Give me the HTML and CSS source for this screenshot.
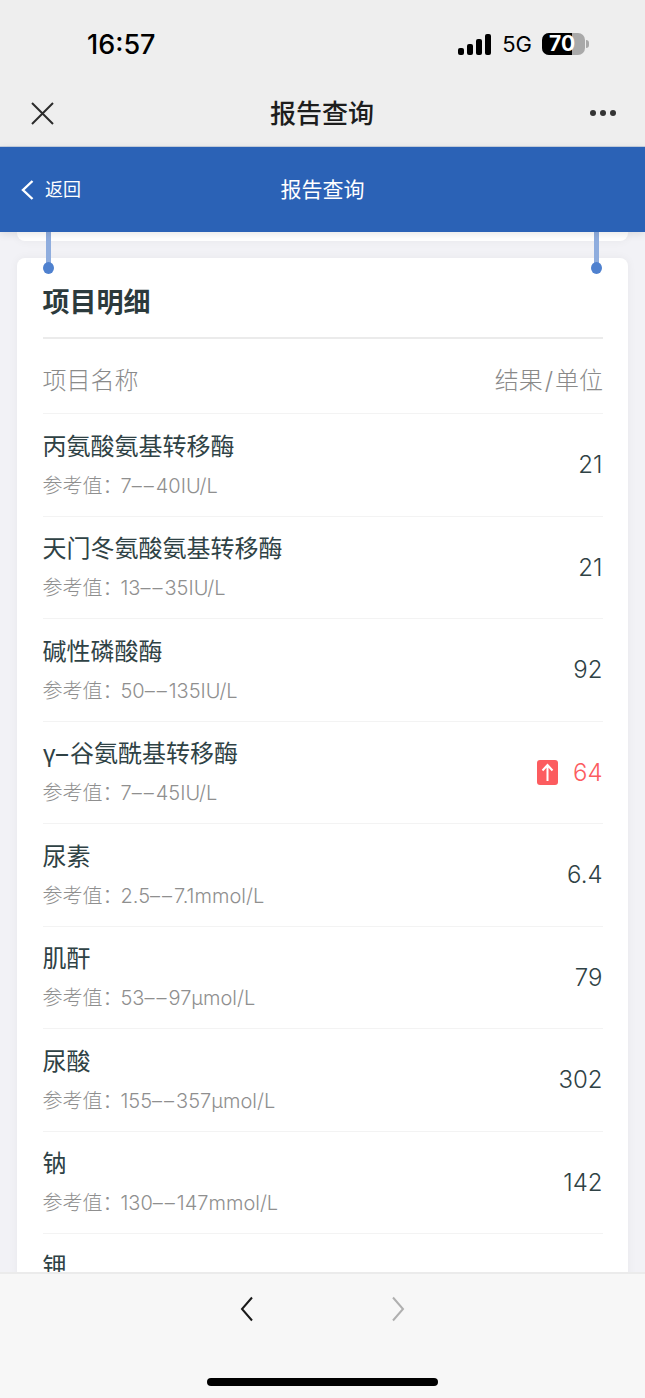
FILE: index.html
```html
<!DOCTYPE html>
<html>

<head>
    <meta charset="utf-8">
    <title>报告查询</title>
    <link rel="stylesheet" href="styles.css">
</head>

<body>
    <div class="status-bar">
        <span class="time">16:57</span>
        <div class="status-right">
            <svg class="signal" width="34" height="21" viewBox="0 0 34 21">
                <rect x="0" y="14" width="6" height="7" rx="2"></rect>
                <rect x="9" y="10" width="6" height="11" rx="2"></rect>
                <rect x="18" y="5" width="6" height="16" rx="2"></rect>
                <rect x="27" y="0" width="6" height="21" rx="2"></rect>
            </svg>
            <span class="network">5G</span>
            <div class="battery">
                <div class="battery-body">
                    <div class="battery-fill"></div>
                    <span class="battery-num">70</span>
                </div>
                <div class="battery-cap"></div>
            </div>
        </div>
    </div>

    <div class="nav-bar">
        <svg width="23" height="23" viewBox="0 0 23 23" class="nav-icon">
            <path d="M1 1 L22 22 M22 1 L1 22" fill="none" stroke="#2b2b2b" stroke-width="2"></path>
        </svg>
        <span class="nav-title">报告查询</span>
        <div class="dots"><i></i><i></i><i></i></div>
    </div>

    <div class="blue-header">
        <div class="back">
            <svg width="14" height="22" viewBox="0 0 14 22">
                <path d="M12.5 2 L3 11 L12.5 20" fill="none" stroke="#fff" stroke-width="2.4"></path>
            </svg>
            <span>返回</span>
        </div>
        <span class="blue-title">报告查询</span>
    </div>

    <div class="content">
        <div class="prev-card"></div>
        <div class="pin pin-left"></div>
        <div class="pin pin-right"></div>
        <div class="card">
            <h2 class="card-title">项目明细</h2>
            <div class="table-head">
                <span>项目名称</span>
                <span>结果<span class="slash">/</span>单位</span>
            </div>
            <div class="row">
                <div><div class="name">丙氨酸氨基转移酶</div><div class="ref"><span class="ref-label">参考值：</span>7<span class="dash">––</span>40IU/L</div></div>
                <div class="value">21</div>
            </div>
            <div class="row">
                <div><div class="name">天门冬氨酸氨基转移酶</div><div class="ref"><span class="ref-label">参考值：</span>13<span class="dash">––</span>35IU/L</div></div>
                <div class="value">21</div>
            </div>
            <div class="row">
                <div><div class="name">碱性磷酸酶</div><div class="ref"><span class="ref-label">参考值：</span>50<span class="dash">––</span>135IU/L</div></div>
                <div class="value">92</div>
            </div>
            <div class="row">
                <div><div class="name">γ<span class="dash">–</span>谷氨酰基转移酶</div><div class="ref"><span class="ref-label">参考值：</span>7<span class="dash">––</span>45IU/L</div></div>
                <div class="value high">
                    <svg width="21" height="25" viewBox="0 0 21 25">
                        <rect width="21" height="25" rx="3" fill="#fc5c5f"></rect>
                        <path d="M10.5 21 V5 M5.5 10.5 L10.5 5 L15.5 10.5" fill="none" stroke="#fff" stroke-width="2"></path>
                    </svg>
                    <span>64</span>
                </div>
            </div>
            <div class="row">
                <div><div class="name">尿素</div><div class="ref"><span class="ref-label">参考值：</span>2.5<span class="dash">––</span>7.1mmol/L</div></div>
                <div class="value">6.4</div>
            </div>
            <div class="row">
                <div><div class="name">肌酐</div><div class="ref"><span class="ref-label">参考值：</span>53<span class="dash">––</span>97μmol/L</div></div>
                <div class="value">79</div>
            </div>
            <div class="row">
                <div><div class="name">尿酸</div><div class="ref"><span class="ref-label">参考值：</span>155<span class="dash">––</span>357μmol/L</div></div>
                <div class="value">302</div>
            </div>
            <div class="row">
                <div><div class="name">钠</div><div class="ref"><span class="ref-label">参考值：</span>130<span class="dash">––</span>147mmol/L</div></div>
                <div class="value">142</div>
            </div>
            <div class="row">
                <div><div class="name">钾</div><div class="ref"></div></div>
            </div>
        </div>
    </div>

    <div class="toolbar">
        <div class="toolbar-arrows">
            <svg width="14" height="26" viewBox="0 0 14 26">
                <path d="M12 1.5 L2 13 L12 24.5" fill="none" stroke="#1a1a1a" stroke-width="2"></path>
            </svg>
            <svg width="14" height="26" viewBox="0 0 14 26">
                <path d="M2 1.5 L12 13 L2 24.5" fill="none" stroke="#b0b0b0" stroke-width="2"></path>
            </svg>
        </div>
        <div class="home-bar"></div>
    </div>
</body>

</html>
```

FILE: styles.css
```css
* {
    box-sizing: border-box;
}

html,
body {
    margin: 0;
    height: 1398px;
    overflow: hidden;
}

body {
    display: flex;
    flex-direction: column;
    font-family: Inter, "Noto Sans CJK SC", sans-serif;
    background-color: #f2f2f6;
}

.status-bar {
    height: 88px;
    flex: none;
    padding: 0 56px 0 87px;
    display: flex;
    justify-content: space-between;
    align-items: center;
    background-color: #eeeeee;
    color: #000;
}

.time {
    font-size: 27px;
    font-weight: 500;
}

.status-right {
    display: flex;
    align-items: center;
}

.signal {
    margin-right: 10px;
}

.signal rect {
    fill: #000;
}

.network {
    font-size: 22px;
    font-weight: 400;
    margin-right: 10px;
}

.battery {
    display: flex;
    align-items: center;
}

.battery-body {
    position: relative;
    width: 43px;
    height: 22px;
    border-radius: 7px;
    background-color: #a9a9a9;
}

.battery-fill {
    width: 30px;
    height: 100%;
    border-radius: 7px 0 0 7px;
    background-color: #000;
}

.battery-num {
    position: absolute;
    left: 7px;
    top: -1px;
    font-size: 21px;
    line-height: 24px;
    font-weight: 700;
    color: #fff;
}

.battery-cap {
    width: 3px;
    height: 8px;
    margin-left: 1px;
    border-radius: 0 3px 3px 0;
    background-color: #a9a9a9;
}

.nav-bar {
    height: 59px;
    flex: none;
    padding: 0 29px 8px 31px;
    display: flex;
    justify-content: space-between;
    align-items: center;
    background-color: #eeeeee;
    border-bottom: 1px solid #c5cfdf;
}

.nav-title {
    margin-bottom: 4px;
    font-size: 26px;
    font-weight: 500;
    color: #1d1d1d;
}

.dots {
    display: flex;
    gap: 4px;
}

.dots i {
    width: 6px;
    height: 6px;
    border-radius: 50%;
    background-color: #333;
}

.blue-header {
    position: relative;
    height: 85px;
    flex: none;
    display: flex;
    align-items: center;
    justify-content: center;
    background-color: #2b62b6;
    color: #fff;
    box-shadow: 0 2px 8px rgba(0, 0, 0, 0.1);
    z-index: 2;
}

.back {
    position: absolute;
    left: 20px;
    top: 31px;
    display: flex;
    align-items: center;
    gap: 11px;
    font-size: 18px;
    line-height: 24px;
}

.blue-title {
    margin-bottom: 4px;
    font-size: 21px;
}

.content {
    position: relative;
    flex: 1;
    min-height: 0;
    overflow: hidden;
    padding: 0 17px;
}

.prev-card {
    height: 9px;
    margin-bottom: 17px;
    background-color: #fff;
    border-radius: 0 0 8px 8px;
    box-shadow: 0 0 10px rgba(0, 0, 0, 0.05);
}

.pin {
    position: absolute;
    top: 0;
    width: 11px;
    height: 42px;
    z-index: 1;
}

.pin::before {
    content: "";
    position: absolute;
    left: 3px;
    top: 0;
    width: 5px;
    height: 32px;
    background-color: #8fadde;
}

.pin::after {
    content: "";
    position: absolute;
    left: 0;
    top: 30px;
    width: 11px;
    height: 12px;
    border-radius: 50%;
    background-color: #4f81cf;
}

.pin-left {
    left: 43px;
}

.pin-right {
    left: 591px;
}

.card {
    padding: 0 25px 0 25.5px;
    background-color: #fff;
    border-radius: 8px 8px 0 0;
    box-shadow: 0 0 10px rgba(0, 0, 0, 0.05);
}

.card-title {
    height: 81px;
    margin: 0;
    padding-top: 26px;
    font-size: 27px;
    line-height: 38px;
    font-weight: 700;
    color: #2c3a3c;
    border-bottom: 2px solid #ebebeb;
}

.table-head {
    height: 75px;
    padding-top: 5px;
    display: flex;
    justify-content: space-between;
    align-items: center;
    font-size: 24px;
    font-weight: 300;
    color: #8a8a8a;
    border-bottom: 1px solid #f3f3f3;
}

.slash {
    margin: 0 2px;
}

.row {
    height: 102.5px;
    display: flex;
    justify-content: space-between;
    align-items: center;
    border-bottom: 1px solid #f3f3f3;
}

.name {
    font-size: 24px;
    line-height: 34px;
    color: #2f4245;
    margin-bottom: 8px;
}

.ref {
    min-height: 28px;
    font-size: 20px;
    line-height: 28px;
    font-weight: 300;
    color: #8f8f8f;
}

.ref-label {
    margin-right: -2px;
}

.dash {
    letter-spacing: 2px;
}

.value {
    display: flex;
    align-items: center;
    gap: 15px;
    margin-right: 0.5px;
    font-size: 24px;
    font-weight: 350;
    color: #2f4245;
}

.value.high {
    color: #fc5c5f;
}

.toolbar {
    position: relative;
    height: 126px;
    flex: none;
    background-color: #f7f7f7;
    border-top: 2px solid #ebebeb;
}

.toolbar-arrows {
    display: flex;
    justify-content: center;
    gap: 137px;
    padding-top: 22px;
}

.home-bar {
    width: 231px;
    height: 8px;
    margin: 56px auto 0;
    border-radius: 4px;
    background-color: #000;
}
```
